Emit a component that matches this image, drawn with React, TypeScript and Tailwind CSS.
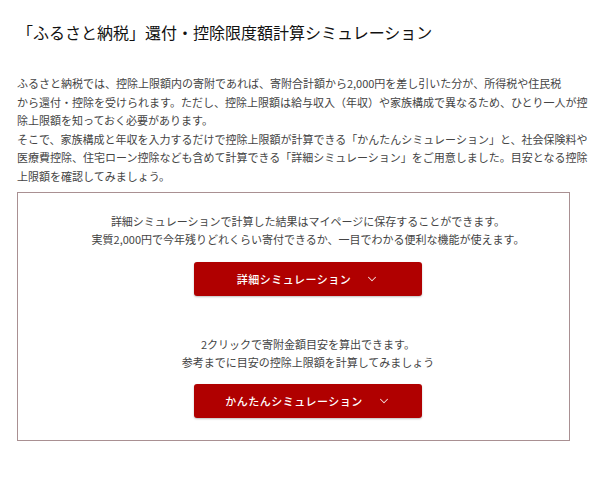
import { ChevronDown } from "lucide-react";

const FONT = "font-['Noto_Sans_CJK_JP','Noto_Sans',sans-serif]";

const INTRO = [
  "ふるさと納税では、控除上限額内の寄附であれば、寄附合計額から2,000円を差し引いた分が、所得税や住民税",
  "から還付・控除を受けられます。ただし、控除上限額は給与収入（年収）や家族構成で異なるため、ひとり一人が控",
  "除上限額を知っておく必要があります。",
  "そこで、家族構成と年収を入力するだけで控除上限額が計算できる「かんたんシミュレーション」と、社会保険料や",
  "医療費控除、住宅ローン控除なども含めて計算できる「詳細シミュレーション」をご用意しました。目安となる控除",
  "上限額を確認してみましょう。",
];

function SimButton({ label }: { label: string }) {
  return (
    <button
      type="button"
      className="mx-auto flex h-[34px] w-[228px] items-center justify-center gap-[14px] rounded-[3px] bg-[#b00000] text-[11px] font-medium tracking-[0.5px] text-white shadow-[0_1px_2px_rgba(0,0,0,0.25)]"
    >
      <span>{label}</span>
      <ChevronDown className="h-[14px] w-[14px] text-[#f3dede]" strokeWidth={1.75} />
    </button>
  );
}

export default function App() {
  return (
    <div className={`${FONT} min-h-[477px] bg-white px-[17px] pt-[22px] text-[#333]`}>
      <h1 className="text-[16px] leading-[20px] font-normal text-[#111]">
        「ふるさと納税」還付・控除限度額計算シミュレーション
      </h1>

      <div className="mt-[32px] text-[11px] leading-[18.5px] text-[#444]">
        {INTRO.map((line) => (
          <p key={line} className="whitespace-nowrap">
            {line}
          </p>
        ))}
      </div>

      <section className="mt-[7px] w-[553px] border border-[#a99092] pt-[19px] pb-[22px] pl-[29px] text-center">
        <p className="text-[11px] leading-[18px] text-[#444]">
          詳細シミュレーションで計算した結果はマイページに保存することができます。
          <br />
          実質2,000円で今年残りどれくらい寄付できるか、一目でわかる便利な機能が使えます。
        </p>
        <div className="mt-[14px]">
          <SimButton label="詳細シミュレーション" />
        </div>

        <p className="mt-[39px] text-[11px] leading-[18px] text-[#444]">
          2クリックで寄附金額目安を算出できます。
          <br />
          参考までに目安の控除上限額を計算してみましょう
        </p>
        <div className="mt-[13px]">
          <SimButton label="かんたんシミュレーション" />
        </div>
      </section>
    </div>
  );
}
